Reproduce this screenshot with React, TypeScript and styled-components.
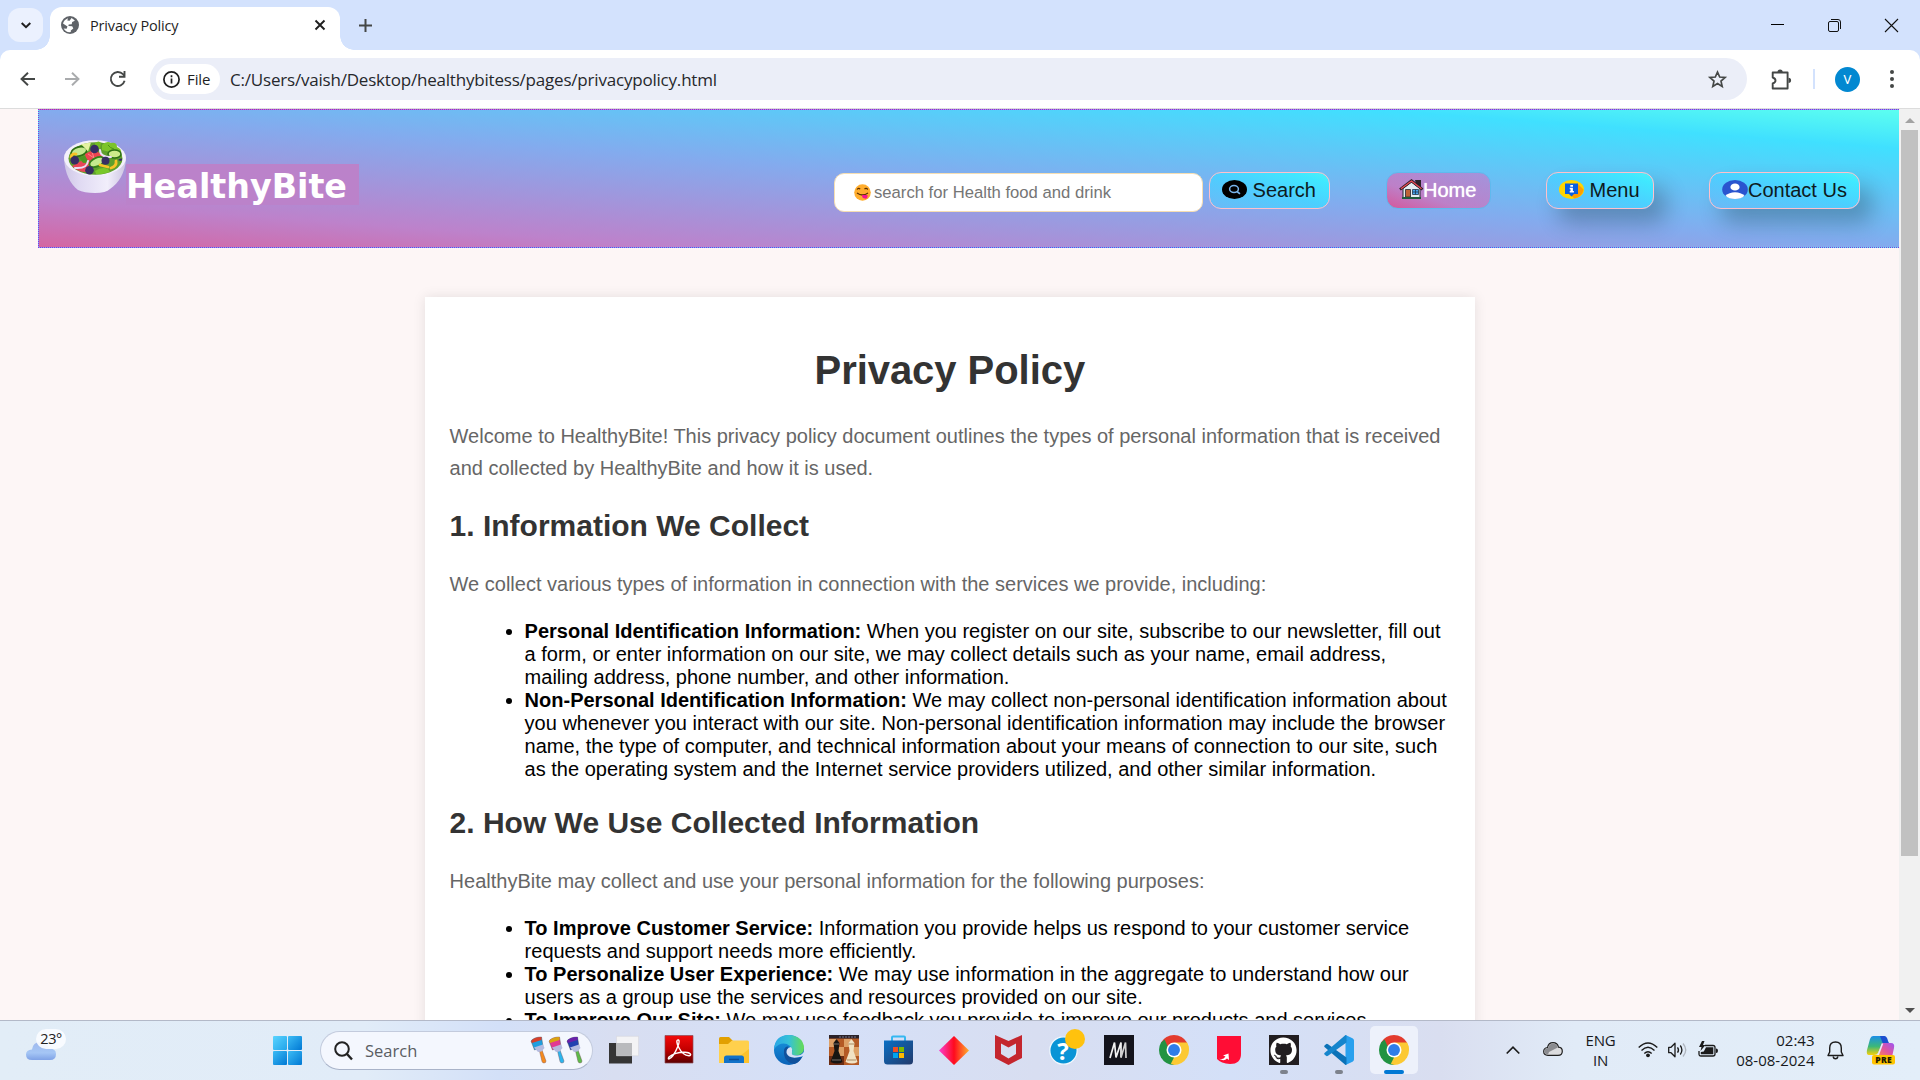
import React from "react";
import styled, { createGlobalStyle, css } from "styled-components";
import { FaGithub } from "react-icons/fa";

const Global = createGlobalStyle`
  * { box-sizing: border-box; }
  html, body { margin: 0; padding: 0; overflow: hidden; }
  svg { display: block; flex: none; overflow: visible; }
`;

const UI = `"Open Sans", "Noto Sans", sans-serif`;
const ARIAL = `"Liberation Sans", Arial, sans-serif`;

const Screen = styled.div`
  width: 1920px;
  height: 1080px;
  display: flex;
  flex-direction: column;
  overflow: hidden;
  background: #fff;
  font-family: ${ARIAL};
`;

/* ---------- Browser chrome ---------- */

const TabStrip = styled.div`
  height: 50px;
  flex: none;
  display: flex;
  background: #d3e2fd;
`;

const TabSearch = styled.div`
  width: 35px;
  height: 34px;
  margin: 8px 7px 0 8px;
  border-radius: 12px;
  background: #ebf1fe;
  display: flex;
  align-items: center;
  justify-content: center;
`;

const Tab = styled.div`
  position: relative;
  width: 290px;
  height: 43px;
  margin-top: 7px;
  padding: 0 14px 7px 11px;
  display: flex;
  align-items: center;
  border-radius: 12px 12px 0 0;
  background: #fff;

  &::before,
  &::after {
    content: "";
    position: absolute;
    bottom: 0;
    width: 14px;
    height: 14px;
  }
  &::before {
    left: -14px;
    background: radial-gradient(circle at 0 0, transparent 13.5px, #fff 14px);
  }
  &::after {
    right: -14px;
    background: radial-gradient(circle at 100% 0, transparent 13.5px, #fff 14px);
  }
`;

const TabTitle = styled.span`
  flex: 1;
  margin: 1px 0 0 11px;
  font: 400 14.5px/20px ${UI};
  letter-spacing: -0.15px;
  color: #1f1f1f;
`;

const NewTab = styled.div`
  width: 50px;
  display: flex;
  align-items: center;
  justify-content: center;
`;

const WindowControls = styled.div`
  margin-left: auto;
  display: flex;
  align-items: center;
  gap: 44px;
  padding-right: 22px;
`;

const ToolbarBack = styled.div`
  flex: none;
  background: #d3e2fd;
`;

const Toolbar = styled.div`
  height: 59px;
  display: flex;
  align-items: center;
  background: #fff;
  border-bottom: 1px solid #dcdcdc;
  border-radius: 10px 10px 0 0;
`;

const NavIcons = styled.div`
  width: 150px;
  padding-left: 20px;
  display: flex;
  align-items: center;
  gap: 30px;
`;

const AddressBar = styled.div`
  width: 1597px;
  height: 42px;
  padding: 0 20px 0 6px;
  display: flex;
  align-items: center;
  border-radius: 21px;
  background: #ebeef8;
`;

const FileChip = styled.div`
  width: 64px;
  height: 30px;
  padding-left: 7px;
  display: flex;
  align-items: center;
  gap: 7px;
  border-radius: 15px;
  background: #fff;
  font: 400 15px/20px ${UI};
  letter-spacing: -0.1px;
  color: #1f1f1f;
`;

const Url = styled.span`
  flex: 1;
  margin: 2px 0 0 10px;
  font: 400 17px/24px ${UI};
  letter-spacing: -0.2px;
  color: #26282c;
`;

const ToolbarRight = styled.div`
  flex: 1;
  padding: 0 23px 0 24px;
  display: flex;
  align-items: center;
`;

const Separator = styled.div`
  width: 2px;
  height: 20px;
  margin: 0 20px 0 21px;
  background: #d3e2fd;
`;

const Avatar = styled.div`
  width: 25px;
  height: 25px;
  margin-right: auto;
  border-radius: 50%;
  background: #0288d1;
  color: #fff;
  font: 400 13px/25px Roboto, sans-serif;
  text-align: center;
`;

/* ---------- Web page ---------- */

const Viewport = styled.div`
  height: 911px;
  flex: none;
  display: flex;
  overflow: hidden;
  background: #fdf6f6;
`;

const Page = styled.main`
  width: 1899px;
  height: 911px;
  overflow: hidden;
`;

const SiteHeader = styled.header`
  height: 139px;
  margin-left: 38px;
  padding: 0 39px 0 25px;
  display: flex;
  align-items: flex-start;
  border: 1px dotted blueviolet;
  border-right: 0;
  background-image: linear-gradient(
    to top right,
    #d466a2 0%,
    #bd82cb 17%,
    #83abee 50%,
    #40e0ff 86%,
    #5cfff0 100%
  );
`;

const Brand = styled.div`
  display: flex;
  margin: 30px auto 0 0;
`;

const BrandName = styled.div`
  width: 233px;
  height: 41px;
  margin-top: 24px;
  padding-left: 0;
  background: #bb82ca;
  color: #fff;
  font: 700 33.3px/45px "DejaVu Sans", Verdana, sans-serif;
  letter-spacing: 0;
`;

const SearchField = styled.div`
  width: 369px;
  height: 39px;
  margin: 63px 6px 0 0;
  padding-left: 19px;
  display: flex;
  align-items: center;
  gap: 3px;
  border: 1px solid wheat;
  border-radius: 10px;
  background: #fff;
  color: #757575;
  font: 400 16.667px/20px ${ARIAL};
`;

const NavButton = styled.a<{ $width: number; $gap?: number; $raised?: boolean; $active?: boolean }>`
  width: ${(p) => p.$width}px;
  height: 37px;
  margin: 62px 0 0 ${(p) => p.$gap ?? 0}px;
  padding: 0 0 1px 12px;
  display: flex;
  align-items: center;
  border: 1px solid pink;
  border-radius: 12px;
  background: linear-gradient(to top right, #6cb9f6 0%, #4ccfff 50%, #40e8ff 85%, #4ef0f8 100%);
  color: #0d1a20;
  font: 400 20px/23px ${ARIAL};
  white-space: pre;
  & > svg {
    margin-bottom: 2px;
  }
  ${(p) =>
    p.$raised &&
    css`
      box-shadow: 12px 14px 22px rgba(0, 0, 0, 0.24);
    `}
  ${(p) =>
    p.$active &&
    css`
      padding-left: 13px;
      color: #fff;
      border-color: #5fb9ee;
      background: linear-gradient(to top right, #d4589c 0%, #bd80c8 35%, #a294dc 100%);
      text-shadow: 0 0 1px #fff;
    `}
`;

const Card = styled.article`
  width: 1050px;
  height: 1400px;
  margin: 49px 0 0 425px;
  padding: 50px 25px 50px 24.6px;
  background: #fff;
  box-shadow: 0 0 12px rgba(0, 0, 0, 0.1);
`;

const Title = styled.h1`
  margin: 0 0 27px;
  text-align: center;
  color: #333;
  font: 700 40px/46px ${ARIAL};
  letter-spacing: -0.05px;
`;

const Heading = styled.h2`
  margin: 25px 0;
  color: #333;
  font: 700 30px/34px ${ARIAL};
`;

const Paragraph = styled.p`
  margin: 0;
  color: #666;
  font: 400 20px/32px ${ARIAL};
`;

const List = styled.ul`
  margin: 20px 0 25px;
  padding-left: 75px;
  color: #000;
  font: 400 20px/23px ${ARIAL};
`;

const Scrollbar = styled.div`
  width: 21px;
  padding: 9px 2px 7px;
  display: flex;
  flex-direction: column;
  align-items: center;
  background: #f1f1f1;
`;

const Arrow = styled.div<{ $down?: boolean }>`
  width: 0;
  height: 0;
  border: 5px solid transparent;
  border-top-width: ${(p) => (p.$down ? 5 : 0)}px;
  border-bottom-width: ${(p) => (p.$down ? 0 : 5)}px;
  ${(p) => (p.$down ? "border-top-color: #505050;" : "border-bottom-color: #a3a3a3;")}
`;

const Thumb = styled.div`
  width: 17px;
  height: 726px;
  margin: 7px 0 auto;
  background: #c1c1c1;
`;

/* ---------- Taskbar ---------- */

const Taskbar = styled.footer`
  height: 60px;
  flex: none;
  display: flex;
  border-top: 1px solid #b3b9c8;
  background: linear-gradient(
    90deg,
    #e2edf7 0%,
    #e1ecf8 19%,
    #d3e0f8 26%,
    #d8def1 32%,
    #d5e0f8 43%,
    #d8def1 54%,
    #d4e0f8 64%,
    #d9def0 75%,
    #e1ebf7 82%,
    #e3eef9 100%
  );
`;

const Weather = styled.div`
  position: relative;
  width: 273px;
  padding: 21px 0 0 26px;
`;

const Degrees = styled.div`
  position: absolute;
  left: 36px;
  top: 8px;
  width: 30px;
  height: 20px;
  border-radius: 10px;
  background: rgba(250, 252, 255, 0.92);
  color: #222;
  text-align: center;
  font: 400 14.5px/20px ${UI};
  letter-spacing: -0.5px;
`;

const StartLogo = styled.div`
  width: 29px;
  height: 29px;
  margin: 15px 18px 0 0;
  display: grid;
  grid-template-columns: 1fr 1fr;
  gap: 1px;
  & > i {
    background: linear-gradient(135deg, #3cbcf5, #0078d4);
    border-radius: 1px;
  }
  & > i:first-child {
    background: linear-gradient(135deg, #5ad4ff, #22a4ea);
  }
`;

const TaskSearch = styled.div`
  width: 273px;
  height: 39px;
  margin-top: 10px;
  padding: 0 9px 0 13px;
  display: flex;
  align-items: center;
  border: 1px solid #c3cbdd;
  border-bottom-color: #a9b3c9;
  border-radius: 20px;
  background: #f4f7fe;
`;

const TaskSearchText = styled.span`
  flex: 1;
  margin-left: 12px;
  color: #5a5d63;
  font: 400 16.5px/24px ${UI};
  letter-spacing: 0;
`;

const Apps = styled.div`
  display: flex;
  margin-left: 3px;
`;

const Slot = styled.div<{ $active?: boolean }>`
  position: relative;
  width: 55px;
  height: 58px;
  display: flex;
  align-items: center;
  justify-content: center;
  ${(p) =>
    p.$active &&
    css`
      width: 48px;
      height: 48px;
      margin: 5px 3.5px 0;
      border-radius: 5px;
      background: #edf1fb;
    `}
`;

const Indicator = styled.i<{ $active?: boolean }>`
  position: absolute;
  bottom: ${(p) => (p.$active ? 0 : 5)}px;
  width: ${(p) => (p.$active ? 20 : 8)}px;
  height: 4px;
  border-radius: 2px;
  background: ${(p) => (p.$active ? "#0078d4" : "#7d828c")};
`;

const Tray = styled.div`
  flex: 1;
  display: flex;
  align-items: center;
  padding: 0 0 1px 84.5px;
`;

const TrayItem = styled.div<{ $left?: number; $lift?: number }>`
  margin-left: ${(p) => p.$left ?? 0}px;
  margin-bottom: ${(p) => p.$lift ?? 0}px;
`;

const TrayText = styled.div<{ $width: number; $left: number; $align: string; $track?: number }>`
  width: ${(p) => p.$width}px;
  margin-left: ${(p) => p.$left}px;
  text-align: ${(p) => p.$align};
  color: #17191c;
  font: 400 15px/20px ${UI};
  letter-spacing: ${(p) => p.$track ?? -0.2}px;
  white-space: nowrap;
`;

/* ---------- Drawings ---------- */

const stroke = (color: string, w: number) => ({ fill: "none", stroke: color, strokeWidth: w });

const Salad = () => (
  <svg width="62" height="54" viewBox="0 0 62 54">
    <defs>
      <linearGradient id="bowl" x1="0" x2="1">
        <stop offset="0" stopColor="#cfc7e6" />
        <stop offset=".25" stopColor="#e0daf3" />
        <stop offset=".7" stopColor="#f1eefb" />
        <stop offset="1" stopColor="#cdc5e2" />
      </linearGradient>
    </defs>
    <path d="M0 19C1 33 6 44 14 50Q20 53 31 53T46 49C55 43 61 33 62 19Z" fill="url(#bowl)" />
    <ellipse cx="31" cy="18" rx="31" ry="17.800" fill="#f3f0fb" />
    <ellipse cx="31.500" cy="18.500" rx="27" ry="16.300" fill="#5f9f2c" />
    <ellipse cx="15" cy="11.500" rx="8" ry="4.500" fill="#c5e98f" stroke="#2e7014" strokeWidth="1.700" transform="rotate(-14 15 11.500)" />
    <path d="M17 4 27 2.500l-3 9Z" fill="#e4f2a0" />
    <path d="M31 3q4-3 6 0l-1 6-5-1Z" fill="#74bd22" />
    <path d="M38 5q5-5 9-2 6-1 6 4 5 2 4 6l-11-1-8-2Z" fill="#7cc42a" />
    <path d="M44 5q2 3 6 4" {...stroke("#4c9319", 1)} />
    <ellipse cx="50.500" cy="14" rx="6.500" ry="4" fill="#cdea8b" stroke="#2e7014" strokeWidth="1.500" />
    <path d="m21 14 8-4 9 4 3 8-9 4-9-2Z" fill="#ee4450" />
    <path d="m24 14 6 4 7-1M28 12l2 6" {...stroke("#ff8488", 1)} />
    <path d="M8 26q6 6 14 6l3-7-8-4Z" fill="#e84558" />
    <path d="M15 17l6-1 4 6-6 1Z" fill="#4d9722" />
    <ellipse cx="33" cy="22" rx="8" ry="4.300" fill="#c5e98f" stroke="#35801a" strokeWidth="1.800" transform="rotate(-24 33 22)" />
    <path d="M31 31q7-5 13-2l2 3-8 2h-6Z" fill="#79c72a" />
    <path d="M47 28q6-2 5-7M7 17q1-4 5-3M36 25l8 2" {...stroke("#f9c227", 2.800)} strokeLinecap="round" />
    <path d="M36 10q0 7 11 7M11 28q12 1 13-7" {...stroke("#e9def6", 2)} strokeLinecap="round" />
    <circle cx="30.500" cy="9" r="4.300" fill="#372d63" />
    <circle cx="10.800" cy="20.200" r="4.300" fill="#372d63" />
    <circle cx="41.500" cy="20.700" r="4" fill="#372d63" />
    <circle cx="25.500" cy="30.300" r="4.300" fill="#372d63" />
    <path d="M54 20a4 4 0 0 1 4-1.500q1 4-4 1.500Z" fill="#372d63" />
  </svg>
);

const Yummy = () => (
  <svg width="17" height="17" viewBox="0 0 17 17">
    <circle cx="8.500" cy="8.500" r="8.300" fill="#ffad2e" />
    <path d="M3 5.500Q4.500 3.500 6.200 5.200M10.500 5.200Q12 3.500 13.800 5.500" {...stroke("#5d2f00", 1.2)} />
    <path d="M3 9Q8.500 13 14 9" {...stroke("#5d2f00", 1.3)} />
    <path d="M8 11h5.500q.5 4-2.500 3.600-3 0-3-3.600Z" fill="#f4148d" />
  </svg>
);

const SearchBadge = () => (
  <svg width="25" height="19" viewBox="0 0 25 19">
    <ellipse cx="12.500" cy="9.500" rx="12.500" ry="9.500" />
    <ellipse cx="12" cy="9" rx="4.400" ry="3.500" {...stroke("#79b5ec", 1.500)} />
    <path d="m15 11.500 3 2.400" {...stroke("#79b5ec", 1.700)} />
  </svg>
);

const House = () => (
  <svg width="23" height="19" viewBox="0 0 23 19">
    <path d="M15 0h6v8h-4Z" fill="#2a2328" />
    <path d="M3 8.500 11.500 2 20 8.500V18H3Z" fill="#e4eef2" stroke="#222a30" />
    <path d="M0 9.500 11.500.8 22.500 9.500" {...stroke("#2b2226", 2.800)} />
    <path d="M1 8.800 11.500 1 21.500 8.800" {...stroke("#ec4a55", 1.300)} />
    <path d="M5.500 9.500h5V17h-5Z" fill="#bd6337" stroke="#26272e" strokeWidth=".8" />
    <path d="M12.500 9.500h6v5h-6ZM15.500 9.500v5M12.500 12h6" fill="#45a4ee" stroke="#22384e" strokeWidth=".8" />
    <path d="M2 17h19v2H2Z" fill="#205c3d" />
  </svg>
);

const InfoBadge = () => (
  <svg width="25" height="19" viewBox="0 0 25 19">
    <ellipse cx="12.500" cy="9.500" rx="12.500" ry="9.500" fill="#ffd400" />
    <path d="m18.500 3.500 6 6q-1 7-9 9l-5-4Z" fill="#ff9d00" />
    <path d="M6 3.500h13V14h-4l-2.500 2.500L10 14H6Z" fill="#0a5fe0" />
    <path d="M11.300 5h2.700v1.700h-2.700ZM10.700 7.700h3.200V11h1v1.500h-4.200V11h.8V9.200h-.8Z" fill="#fff" />
  </svg>
);

const Person = () => (
  <svg width="26" height="19" viewBox="0 0 26 19">
    <ellipse cx="13" cy="9.500" rx="12.800" ry="9.500" fill="#2a55cf" />
    <ellipse cx="13" cy="7" rx="4.600" ry="3.600" fill="#fff" />
    <path d="M3.500 15.800Q7 12.300 13 12.300T22.500 15.800Q19 19 13 19T3.500 15.800Z" fill="#fff" />
  </svg>
);

const Globe = () => (
  <svg width="18" height="18" viewBox="0 0 18 18">
    <circle cx="9" cy="9" r="9" fill="#5f6368" />
    <path d="M10.500 1.900q2 1.100 3.400 2.900l-2.700 1.300-.5 2.100-3 .4-.3 1.500 3.800.1 1.100 2.200-2.500 2v1.700Q5 16.800 2.600 12.500l3 .2.900-2.200-4.500-3Q3 3.700 7 2.200L6.300 4.500l2.300.2Z" fill="#fff" />
  </svg>
);

const Chrome = () => (
  <svg width="30" height="30" viewBox="0 0 48 48">
    <path d="M24 24 3.220 12A24 24 0 0 1 44.780 12Z" fill="#e33b2e" />
    <path d="M24 24 44.780 12A24 24 0 0 1 24 48Z" fill="#fcc934" />
    <path d="M24 24V48A24 24 0 0 1 3.220 12Z" fill="#229342" />
    <path d="M24 12H44.780L42 19 34.400 18Z" fill="#e33b2e" />
    <path d="M34.400 30 24 48 19 46 24 36Z" fill="#fcc934" />
    <path d="M13.600 30 3.220 12 9 7 13.600 18Z" fill="#229342" />
    <path d="M24 12H44.780A24 24 0 0 1 48 24L34.400 30 34 18Z" fill="#fcc934" />
    <circle cx="24" cy="24" r="12" fill="#fff" />
    <circle cx="24" cy="24" r="9.500" fill="#2f7de9" />
  </svg>
);

const TaskView = () => (
  <svg width="30" height="28" viewBox="0 0 30 28">
    <path d="M0 7h23v20.500H0Z" fill="#353535" />
    <path d="M7.500.3h22v19.500h-22Z" fill="#f3f3f5" stroke="#d4d4d8" strokeWidth=".5" />
    <path d="M7.500 7H23v12.800H7.500Z" fill="#b9babd" />
  </svg>
);

const Acrobat = () => (
  <svg width="30" height="30" viewBox="0 0 30 30">
    <defs>
      <linearGradient id="acro" x2="0" y2="1">
        <stop stopColor="#f20a0a" />
        <stop offset=".5" stopColor="#c40000" />
        <stop offset="1" stopColor="#5c0000" />
      </linearGradient>
    </defs>
    <path d="M1 .5h28v27.500H1Z" fill="url(#acro)" stroke="#8d4b55" strokeWidth=".7" />
    <path d="M14.500 5C12 4.500 12.500 8 14.800 12.500 17 17 21 20.500 25 20.800 28 20.500 27 17.500 21 17.300 15 17 8 19 5 22 3 25 6 24.500 9 20.500 13 15 16.500 6 14.500 5Z" {...stroke("#fff", 1.400)} />
  </svg>
);

const Explorer = () => (
  <svg width="30" height="27" viewBox="0 0 30 27">
    <path d="M0 1.500Q0 0 1.500 0H10l4 4-3 4H0Z" fill="#e2a000" />
    <path d="M0 7H9l4-3.500H28.500Q30 3.500 30 5V26H0Z" fill="#ffd04c" />
    <path d="M30 12v14H12Z" fill="#fdc22b" />
    <path d="M5 26v-5q0-2.500 2.500-2.500h15Q25 18.500 25 21v5Z" fill="#1172c9" />
    <path d="M10 22.500h10" {...stroke("#0b4c94", 1.500)} />
  </svg>
);

const Edge = () => (
  <svg width="30" height="30" viewBox="0 0 30 30">
    <defs>
      <linearGradient id="edgeTop" x1="0" x2="1">
        <stop stopColor="#2aa6e6" />
        <stop offset=".5" stopColor="#35c1d8" />
        <stop offset="1" stopColor="#66dc52" />
      </linearGradient>
      <linearGradient id="edgeMid" x2="0" y2="1">
        <stop stopColor="#1998e0" />
        <stop offset="1" stopColor="#0a62b8" />
      </linearGradient>
    </defs>
    <circle cx="15" cy="15" r="15" fill="url(#edgeMid)" />
    <path d="M0 14Q1 0 15 0 29 1 30 12.500 30 20 22 20.500 17 20.500 18 17 19 14 16 11 8 5 0 14Z" fill="url(#edgeTop)" />
    <path d="M10 15Q9 27 20 29 25 28 28 22 22 24 17 21.500 12 18 14.500 11.500 11 11 10 15Z" fill="#10519c" />
    <path d="M17 12Q12 13 12.500 18 15 25 28 21.500L30 20 30 17Q27 21 22 20.500 17 20.500 18 17 19 14 17 12Z" fill="#d6e1f6" />
  </svg>
);

const Chess = () => (
  <svg width="30" height="30" viewBox="0 0 30 30">
    <path d="M0 0h30v30H0Z" fill="#b45a25" />
    <path d="M0 4h8v8H0ZM15 4h7v8h-7ZM8 12h7v9H8ZM22 12h8v9h-8Z" fill="#dda066" />
    <path d="M0 21h15v9H0Z" fill="#6b2c13" />
    <path d="M0 0h30v3.500H0Z" fill="#2b2228" />
    <path d="M10 2h18" {...stroke("#777389", 1)} strokeDasharray="2 1" />
    <path d="M7.500 4 10.500 8 9.500 16l4 11q-5 3-12 0l4-11L4.500 8Z" fill="#171512" />
    <path d="m22.500 4 3 4-1 8 4 11q-5 3-12 0l4-11-1-8Z" fill="#f1e2c4" />
    <path d="M19.500 9h6M18 25h9" {...stroke("#a98b62", 1)} />
    <path d="M5 9h5M3 25h9" {...stroke("#77706a", 1)} />
  </svg>
);

const Store = () => (
  <svg width="29" height="30" viewBox="0 0 29 30">
    <defs>
      <linearGradient id="store" x2="1" y2="1">
        <stop stopColor="#0a6fc4" />
        <stop offset="1" stopColor="#223a6b" />
      </linearGradient>
    </defs>
    <path d="M8 6V2.500Q8 1.500 9 1.500H20q1 0 1 1V6" {...stroke("#35b8f1", 2)} />
    <path d="M0 5.500H29V26q0 3.500-3.500 3.500h-22Q0 29.500 0 26Z" fill="url(#store)" />
    <path d="M9 12h5v5H9Z" fill="#f25022" />
    <path d="M15 12h5v5h-5Z" fill="#7fba00" />
    <path d="M9 18h5v5H9Z" fill="#00a4ef" />
    <path d="M15 18h5v5h-5Z" fill="#ffb900" />
  </svg>
);

const Diamond = () => (
  <svg width="30" height="29" viewBox="0 0 30 29">
    <defs>
      <linearGradient id="dia">
        <stop stopColor="#fb3fd0" />
        <stop offset=".5" stopColor="#ff0a1e" />
        <stop offset="1" stopColor="#ffb02e" />
      </linearGradient>
    </defs>
    <path d="M15 0 30 14.500 15 29 0 14.500Z" fill="url(#dia)" />
  </svg>
);

const McAfee = () => (
  <svg width="27" height="30" viewBox="0 0 27 30">
    <path d="M0 0 13.500 6 27 0V23L13.500 30 0 23ZM6 8.500V19L13.500 23.500 21 19V8.500L13.500 12.500Z" fill="#c4262e" fillRule="evenodd" />
  </svg>
);

const HelpText = styled.text`
  font: 700 24px "Open Sans", sans-serif;
  fill: #fff;
  text-anchor: middle;
`;

const Help = () => (
  <svg width="30" height="30" viewBox="0 0 30 30">
    <circle cx="14.500" cy="15.500" r="13.700" fill="#0a94d6" stroke="#f1f7fd" strokeWidth="1.300" />
    <HelpText x="14" y="24.500">?</HelpText>
    <circle cx="26" cy="4" r="10" fill="#ffc20e" />
  </svg>
);

const MLogo = () => (
  <svg width="30" height="30" viewBox="0 0 30 30">
    <path d="M0 0h30v30H0Z" fill="#14141c" />
    <path d="M6 23 10.500 7.500 12 22.500 17 7.500V22.500" {...stroke("#f2f2f2", 1.700)} />
    <path d="M17 22.500 21.500 7.500 22 23" {...stroke("#d0d0d0", 1.700)} />
  </svg>
);

const RedShield = () => (
  <svg width="24" height="28" viewBox="0 0 24 28">
    <path d="M0 0H24V18Q24 28 13 28 4 27.500 0 23Z" fill="#ff0d35" />
    <path d="M1.500 22.500Q6 24.500 8.500 20.500L6 19.500 11.500 17.500 12 24 10 22.500Q7 26 1.500 22.500Z" fill="#fff" />
  </svg>
);

const Vscode = () => (
  <svg width="30" height="30" viewBox="0 0 30 30">
    <path d="M21.500 0 28.500 3.300Q30 4 30 5.500V24.500Q30 26 28.500 26.700L21.500 30Z" fill="#28a0ee" />
    <path d="M.5 10.500 2 9.200Q3 8.500 4 9.300L22.500 22.500V29.500L21.500 30 .5 12Q-.2 11.200.5 10.500Z" fill="#0b72b8" />
    <path d="M.5 19.500 2 20.800Q3 21.500 4 20.700L22.500 7.500V.5L21.500 0 .5 18Q-.2 18.800.5 19.500Z" fill="#1585cc" />
  </svg>
);

const Github = styled.div`
  width: 30px;
  height: 30px;
  display: grid;
  place-items: center;
  background: #211d20;
  color: #fff;
`;

const Brush = ({ x, head, tip, handle }: { x: number; head: string; tip: string; handle: string }) => (
  <g transform={`translate(${x} 0)`}>
    <path d="M8.500 14 11 13l4 11q0 2-2 2-1.500 0-2-1.500Z" fill={handle} stroke="#704a52" strokeWidth=".4" />
    <path d="M0 4Q3 0 10.500 0L12 9.500 3.500 13Z" fill={head} stroke="#444" strokeWidth=".4" />
    <path d="M0 4Q3 0 10.500 0V3L1 6Z" fill={tip} />
    <path d="M3 10.500 12 7.500 13.500 11 10.500 14.500 7 15Z" fill="#b4bbe0" />
  </g>
);

const Brushes = () => (
  <svg width="52" height="31" viewBox="0 -4 52 31">
    <g transform="translate(0 -2)">
      <Brush x={0} head="#1f9fe0" tip="#d8402a" handle="#f58b1e" />
      <Brush x={18} head="#e23a93" tip="#d9a411" handle="#2bb6ef" />
      <Brush x={36} head="#2240b0" tip="#6a1fa8" handle="#5dbb4a" />
    </g>
  </svg>
);

const PreText = styled.text`
  font: 800 8.5px "Open Sans", sans-serif;
  fill: #201a00;
  text-anchor: middle;
  letter-spacing: 0.4px;
`;

const Copilot = () => (
  <svg width="30" height="29" viewBox="0 0 30 29">
    <defs>
      <linearGradient id="copA" x2="0" y2="1">
        <stop stopColor="#1b8fe8" />
        <stop offset=".55" stopColor="#3cb878" />
        <stop offset="1" stopColor="#f8d10a" />
      </linearGradient>
      <linearGradient id="copB" x1="1" x2="0" y2="1">
        <stop stopColor="#9b55f3" />
        <stop offset=".5" stopColor="#e0559f" />
        <stop offset="1" stopColor="#ff8a4c" />
      </linearGradient>
    </defs>
    <path d="M7 0H17Q20 0 21 4L22 7 16 8 12 17Q11 19 8 19H3Q0 19 1 14L4 3Q5 0 7 0Z" fill="url(#copA)" />
    <path d="M14 0h4q3 0 4 5l1 2-6 1Z" fill="#1b4fd0" />
    <path d="M17 7h8q4 0 3 5l-2 9H11l4-12Q15.500 7 17 7Z" fill="url(#copB)" />
    <path d="M16.500 7.500 12 19.500" {...stroke("#e6eefb", 1.500)} />
    <rect x="6" y="19" width="23" height="9.500" rx="2" fill="#ffc400" />
    <PreText x="17.700" y="26.800">PRE</PreText>
  </svg>
);

const BarWeather = () => (
  <svg width="30" height="18" viewBox="0 0 30 18">
    <defs>
      <linearGradient id="cloud" x2="0" y2="1">
        <stop stopColor="#9fb9ee" />
        <stop offset=".6" stopColor="#a5c6f5" />
        <stop offset="1" stopColor="#7fa2e6" />
      </linearGradient>
    </defs>
    <path d="M6 18Q0 18 0 12.500 0 8 6 7.500 7 0 14 0q7 0 9 6.500 7 0 7 5.500 0 6-6 6Z" fill="url(#cloud)" />
  </svg>
);

/* ---------- App ---------- */

export default function App() {
  return (
    <Screen>
      <Global />
      <TabStrip>
        <TabSearch>
          <svg width="10" height="7" viewBox="0 0 10 7"><path d="M.7 1 5 5.200 9.300 1" {...stroke("#1f1f1f", 2)} /></svg>
        </TabSearch>
        <Tab>
          <Globe />
          <TabTitle>Privacy Policy</TabTitle>
          <svg width="12" height="12" viewBox="0 0 12 12"><path d="m1.500 1.500 9 9m0-9-9 9" {...stroke("#1f1f1f", 1.900)} /></svg>
        </Tab>
        <NewTab>
          <svg width="13" height="13" viewBox="0 0 13 13"><path d="M6.500 0v13M0 6.500h13" {...stroke("#444746", 2)} /></svg>
        </NewTab>
        <WindowControls>
          <svg width="13" height="13" viewBox="0 0 13 13"><path d="M0 5.500h13" {...stroke("#000", 1)} /></svg>
          <svg width="13" height="13" viewBox="0 0 13 13">
            <rect x=".5" y="2.500" width="10" height="10" rx="1.500" {...stroke("#111", 1)} />
            <path d="M3 .5h7q2.500 0 2.500 2.500v7" {...stroke("#111", 1)} />
          </svg>
          <svg width="13" height="13" viewBox="0 0 13 13"><path d="m0 0 13 13m0-13L0 13" {...stroke("#111", 1.100)} /></svg>
        </WindowControls>
      </TabStrip>

      <ToolbarBack>
        <Toolbar>
          <NavIcons>
            <svg width="15" height="14" viewBox="0 0 15 14"><path d="M15 7H1.500M8 .7 1.500 7 8 13.300" {...stroke("#444746", 1.900)} /></svg>
            <svg width="15" height="14" viewBox="0 0 15 14"><path d="M0 7h13.500M7 .7 13.500 7 7 13.300" {...stroke("#a9abad", 1.900)} /></svg>
            <svg width="16" height="16" viewBox="0 0 16 16">
              <path d="M14.600 9.800A7 7 0 1 1 13 3.200L14.300 4.600" {...stroke("#444746", 1.900)} />
              <path d="M14.500 0v5.800H9" {...stroke("#444746", 1.900)} />
            </svg>
          </NavIcons>
          <AddressBar>
            <FileChip>
              <svg width="17" height="17" viewBox="0 0 17 17">
                <circle cx="8.500" cy="8.500" r="7.600" {...stroke("#1f1f1f", 1.700)} />
                <path d="M8.500 7.500v5M8.500 4.300v1.900" {...stroke("#1f1f1f", 1.700)} />
              </svg>
              File
            </FileChip>
            <Url>C:/Users/vaish/Desktop/healthybitess/pages/privacypolicy.html</Url>
            <svg width="19" height="18" viewBox="0 0 19 18">
              <path d="m9.500 2 2.200 5 5.400.5-4.100 3.600 1.200 5.300-4.700-2.800-4.700 2.800L6 11.100 1.900 7.500 7.300 7Z" {...stroke("#444746", 1.700)} />
            </svg>
          </AddressBar>
          <ToolbarRight>
            <svg width="21" height="21" viewBox="0 0 21 21">
              <path d="M1.700 3.500H16.600V19.500H1.700V14.500Q4.500 13.500 4.500 11.500T1.700 8.500Z" {...stroke("#444746", 1.900)} strokeLinejoin="round" />
              <path d="M6.500 3a2.600 2.600 0 0 1 5.200 0ZM17.500 8.700a2.600 2.600 0 0 1 0 5.200Z" fill="#444746" />
            </svg>
            <Separator />
            <Avatar>V</Avatar>
            <svg width="10" height="18" viewBox="0 0 10 18" fill="#444746"><circle cx="5" cy="2" r="2" /><circle cx="5" cy="9" r="2" /><circle cx="5" cy="16" r="2" /></svg>
          </ToolbarRight>
        </Toolbar>
      </ToolbarBack>

      <Viewport>
        <Page>
          <SiteHeader>
            <Brand>
              <Salad />
              <BrandName>HealthyBite</BrandName>
            </Brand>
            <SearchField><Yummy />search for Health food and drink</SearchField>
            <NavButton $width={121}><SearchBadge /> Search</NavButton>
            <NavButton $width={105} $gap={56} $active><House />Home</NavButton>
            <NavButton $width={108} $gap={55} $raised><InfoBadge /> Menu</NavButton>
            <NavButton $width={151} $gap={55} $raised><Person />Contact Us</NavButton>
          </SiteHeader>
          <Card>
            <Title>Privacy Policy</Title>
            <Paragraph>
              Welcome to HealthyBite! This privacy policy document outlines the types of personal information that is received and collected by HealthyBite and how it is used.
            </Paragraph>
            <Heading>1. Information We Collect</Heading>
            <Paragraph>We collect various types of information in connection with the services we provide, including:</Paragraph>
            <List>
              <li><strong>Personal Identification Information:</strong> When you register on our site, subscribe to our newsletter, fill out a form, or enter information on our site, we may collect details such as your name, email address, mailing address, phone number, and other information.</li>
              <li><strong>Non-Personal Identification Information:</strong> We may collect non-personal identification information about you whenever you interact with our site. Non-personal identification information may include the browser name, the type of computer, and technical information about your means of connection to our site, such as the operating system and the Internet service providers utilized, and other similar information.</li>
            </List>
            <Heading>2. How We Use Collected Information</Heading>
            <Paragraph>HealthyBite may collect and use your personal information for the following purposes:</Paragraph>
            <List>
              <li><strong>To Improve Customer Service:</strong> Information you provide helps us respond to your customer service requests and support needs more efficiently.</li>
              <li><strong>To Personalize User Experience:</strong> We may use information in the aggregate to understand how our users as a group use the services and resources provided on our site.</li>
              <li><strong>To Improve Our Site:</strong> We may use feedback you provide to improve our products and services.</li>
            </List>
          </Card>
        </Page>
        <Scrollbar>
          <Arrow />
          <Thumb />
          <Arrow $down />
        </Scrollbar>
      </Viewport>

      <Taskbar>
        <Weather>
          <BarWeather />
          <Degrees>23°</Degrees>
        </Weather>
        <StartLogo><i /><i /><i /><i /></StartLogo>
        <TaskSearch>
          <svg width="19" height="19" viewBox="0 0 19 19">
            <circle cx="8" cy="8" r="6.800" {...stroke("#222", 2)} />
            <path d="m13 13 5 5.500" {...stroke("#222", 2.400)} />
          </svg>
          <TaskSearchText>Search</TaskSearchText>
          <Brushes />
        </TaskSearch>
        <Apps>
          <Slot><TaskView /></Slot>
          <Slot><Acrobat /></Slot>
          <Slot><Explorer /></Slot>
          <Slot><Edge /></Slot>
          <Slot><Chess /></Slot>
          <Slot><Store /></Slot>
          <Slot><Diamond /></Slot>
          <Slot><McAfee /></Slot>
          <Slot><Help /></Slot>
          <Slot><MLogo /></Slot>
          <Slot><Chrome /></Slot>
          <Slot><RedShield /></Slot>
          <Slot><Github><FaGithub size={27} /></Github><Indicator /></Slot>
          <Slot><Vscode /><Indicator /></Slot>
          <Slot $active><Chrome /><Indicator $active /></Slot>
        </Apps>
        <Tray>
          <TrayItem>
            <svg width="14" height="8" viewBox="0 0 14 8"><path d="m.7 7.500 6.300-6.300 6.300 6.300" {...stroke("#1b1b1b", 1.700)} /></svg>
          </TrayItem>
          <TrayItem $left={23} $lift={3}>
            <svg width="20" height="14" viewBox="0 0 20 14">
              <path d="M5 13.300Q.7 13.300.7 9.500.7 6 4.500 5.500 5.500.7 10 .7q4.500 0 5.500 4.500 3.800.3 3.800 4 0 4.100-4.300 4.100Z" fill="#dcdcde" stroke="#1f1f1f" strokeWidth="1.200" />
              <path d="M5 12.500Q1.400 12.500 1.400 9.500 1.400 6.300 5 6.100 6 1.400 10 1.400q3.800 0 4.800 4.200L6 10Z" fill="#8b8c90" />
            </svg>
          </TrayItem>
          <TrayText $width={40} $left={18} $align="center">ENG<br />IN</TrayText>
          <TrayItem $left={17}>
            <svg width="20" height="16" viewBox="0 0 20 16">
              <path d="M.7 5.500Q10-3.700 19.300 5.500M3.500 8.600Q10 2 16.500 8.600M6.300 11.500Q10 8 13.700 11.500" {...stroke("#1b1b1b", 1.400)} />
              <circle cx="10" cy="13.300" r="1.900" fill="#1b1b1b" />
            </svg>
          </TrayItem>
          <TrayItem $left={10}>
            <svg width="20" height="16" viewBox="0 0 20 16">
              <path d="M.7 5.300H3L7 1.200V14.800L3 10.700H.7Z" {...stroke("#1b1b1b", 1.300)} strokeLinejoin="round" />
              <path d="M9.500 5.300Q11.500 8 9.500 10.700M12.300 3.500Q15.500 8 12.300 12.500" {...stroke("#1b1b1b", 1.300)} />
              <path d="M15 1.500Q20.500 8 15 14.500" {...stroke("#b0b6bf", 1.300)} />
            </svg>
          </TrayItem>
          <TrayItem $left={10} $lift={2}>
            <svg width="20" height="17" viewBox="0 0 20 17">
              <path d="M7 4.500h8q2 0 2 2v6.500q0 2-2 2H3q-2 0-2-2V10" {...stroke("#1b1b1b", 1.300)} />
              <path d="M8 6.300h7.300v7H2.800V11l3-.5ZM18 7.500q2 0 2 2.300T18 12Z" fill="#1b1b1b" />
              <path d="M4 0 1 6h2.500L2.500 10 7.500 4H5L6.500 0Z" fill="#1b1b1b" />
            </svg>
          </TrayItem>
          <TrayText $width={84} $left={13} $align="right" $track={0}>02:43<br />08-08-2024</TrayText>
          <TrayItem $left={12}>
            <svg width="17" height="19" viewBox="0 0 17 19">
              <path d="M1 14.500 2.700 11V7Q2.700 1 8.500 1t5.800 6v4l1.700 3.500Z" {...stroke("#1b1b1b", 1.400)} strokeLinejoin="round" />
              <path d="M6 15.500q.5 2.200 2.500 2.200t2.500-2.200" {...stroke("#1b1b1b", 1.400)} />
            </svg>
          </TrayItem>
          <TrayItem $left={22}><Copilot /></TrayItem>
        </Tray>
      </Taskbar>
    </Screen>
  );
}
